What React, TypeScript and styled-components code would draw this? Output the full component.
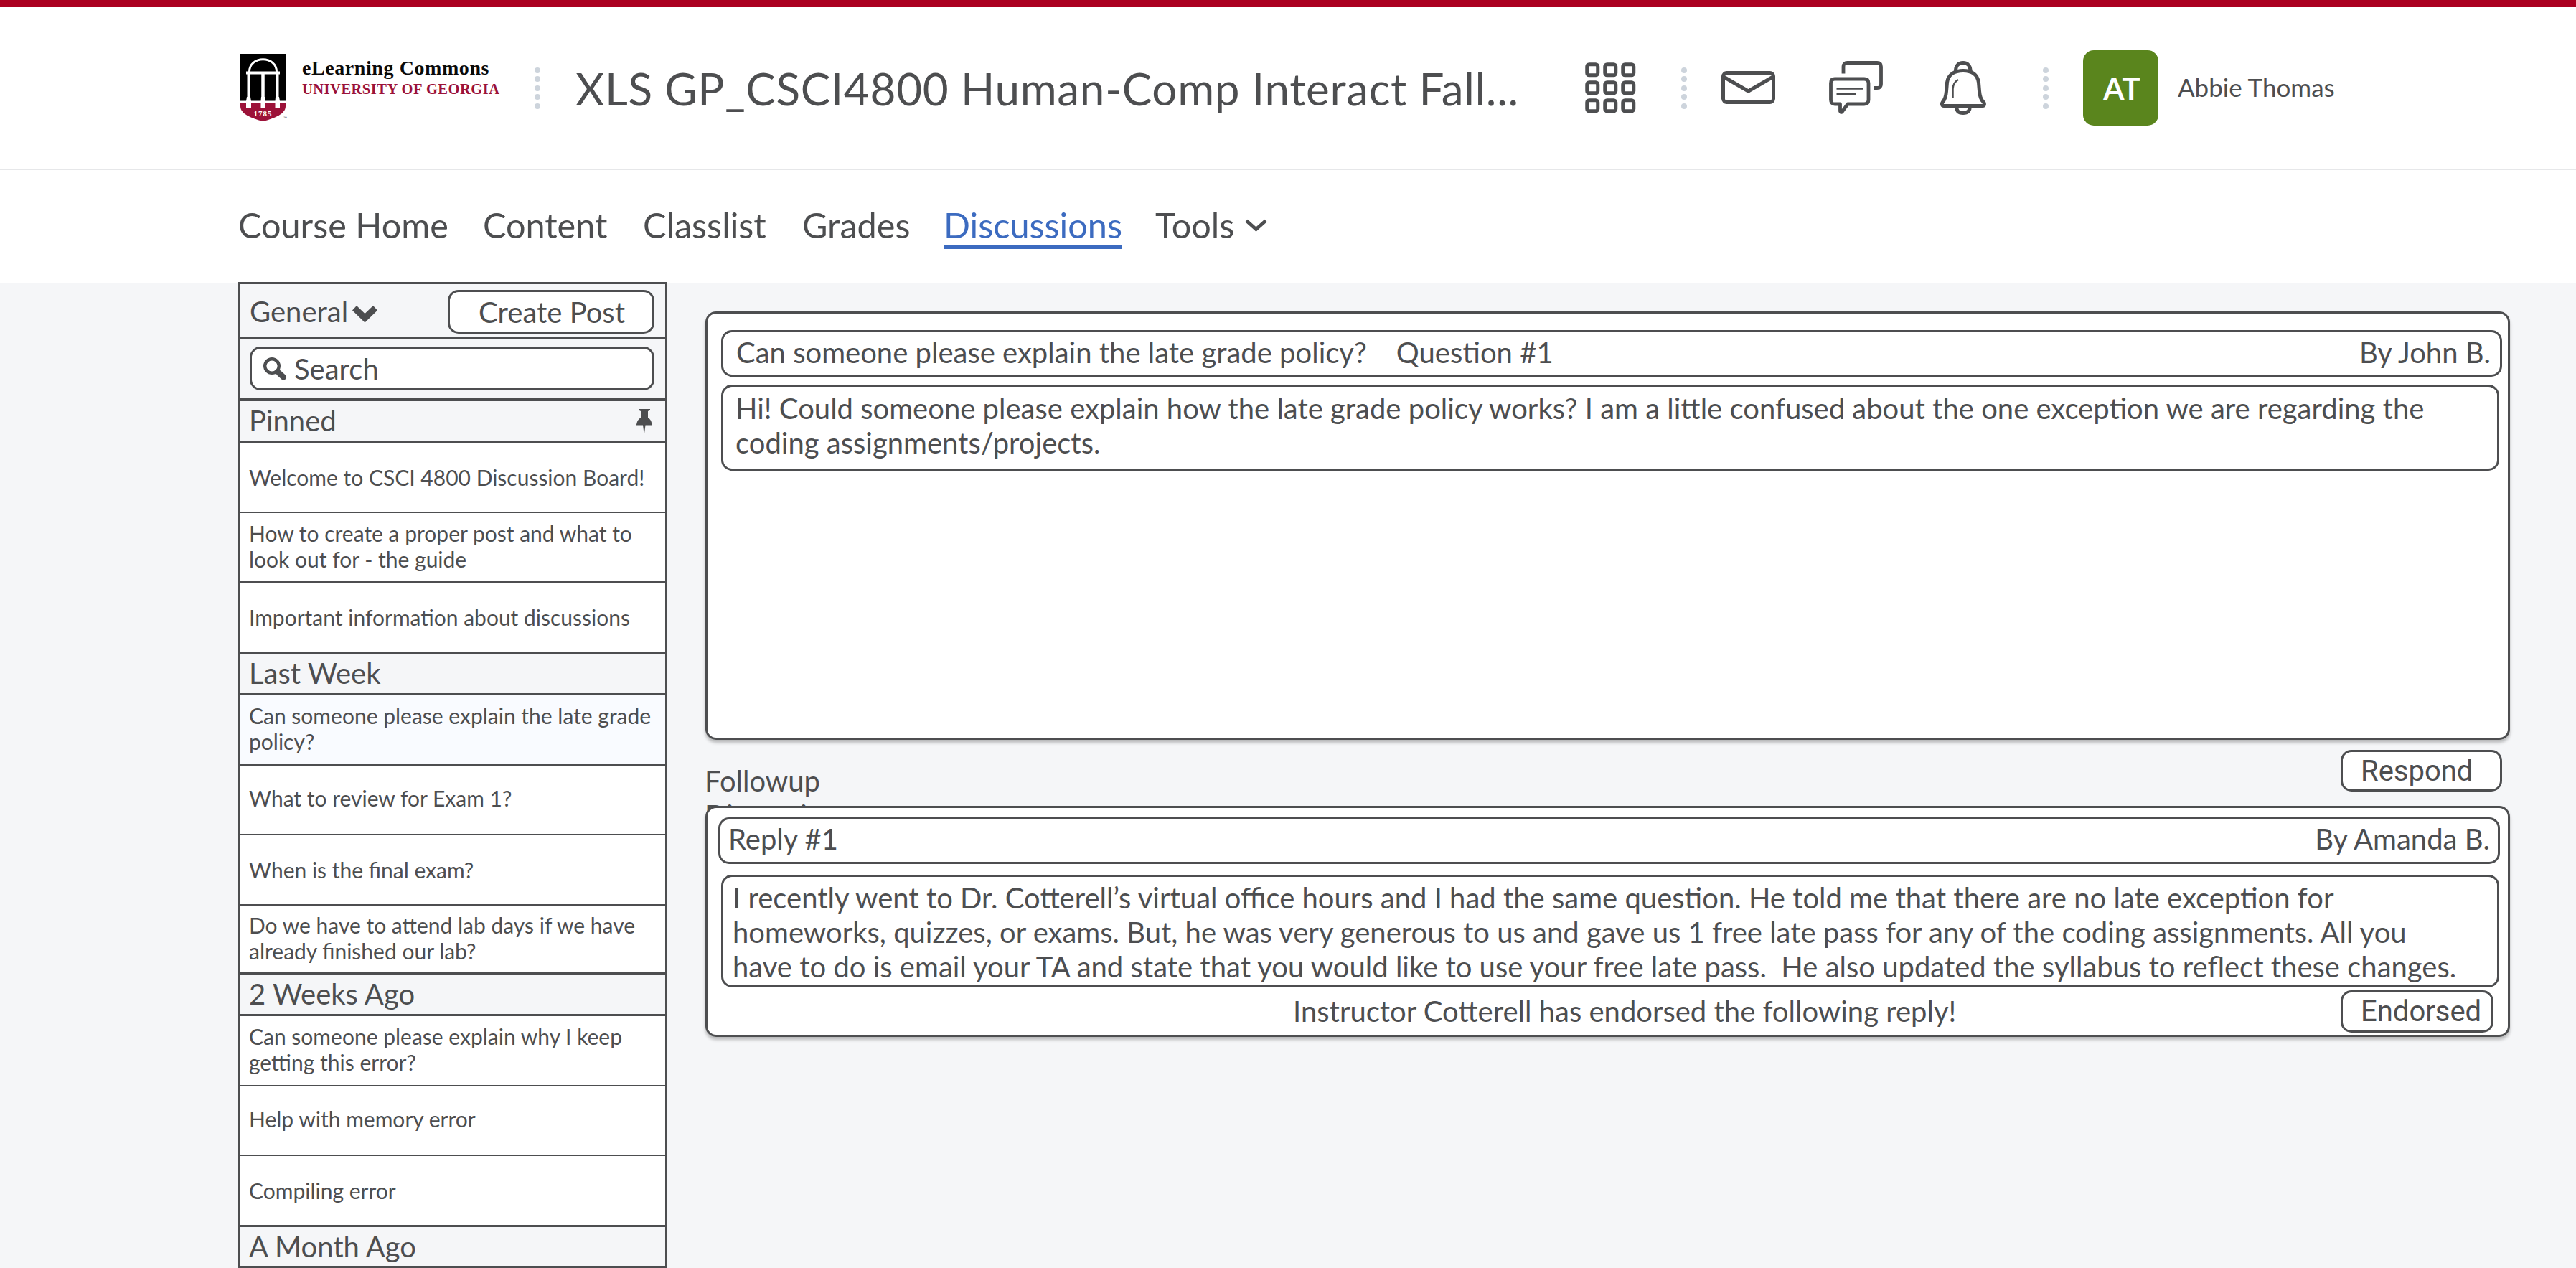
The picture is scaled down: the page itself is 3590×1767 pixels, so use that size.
import React from "react";
import styled, { createGlobalStyle } from "styled-components";

const INK = "#4d4e50";
const PAPER = "#f5f6f8";

const GlobalStyle = createGlobalStyle`
  html, body { margin: 0; padding: 0; background: ${PAPER}; }
  body { font-family: Lato, "Open Sans", sans-serif; color: ${INK}; overflow: hidden; }
  *, *::before, *::after { box-sizing: border-box; }
`;

const Page = styled.div`
  display: flex;
  flex-direction: column;
  width: 3590px;
  height: 1767px;
  overflow: hidden;
`;

const Masthead = styled.header`
  display: flex;
  align-items: flex-start;
  height: 237px;
  padding-left: 335px;
  background: #fff;
  border-top: 10px solid #ab0020;
  border-bottom: 2px solid #e6e7e9;
`;

const Logo = styled.div`
  display: flex;
  width: 410px;
  padding-top: 65px;
`;

const LogoWords = styled.div`
  display: flex;
  flex-direction: column;
  padding: 4px 0 0 19px;
  white-space: nowrap;
`;

const LogoTitle = styled.span`
  font: 700 28px/32px "Liberation Serif", serif;
  letter-spacing: 0.58px;
  color: #0a0a0a;
`;

const LogoSub = styled.span`
  margin-top: 1px;
  font: 700 20.5px/24px "Liberation Serif", serif;
  letter-spacing: 0.5px;
  color: #9c1239;
`;

const Dots = styled.div`
  display: flex;
  flex-direction: column;
  gap: 4.5px;
  width: 8px;
  margin-top: 83.5px;
`;

const Dot = styled.i`
  width: 8px;
  height: 8px;
  border-radius: 50%;
  background: #cdd4dc;
`;

const CourseTitle = styled.h1`
  width: 1405px;
  margin: 76px 0 0 49px;
  font-weight: 400;
  font-size: 62px;
  line-height: 74px;
  letter-spacing: 0.68px;
  white-space: nowrap;
`;

const IconSlot = styled.div<{ $left: number; $top: number }>`
  display: flex;
  margin: ${(p) => p.$top}px 0 0 ${(p) => p.$left}px;
`;

const Spacer = styled.div<{ $w: number }>`
  width: ${(p) => p.$w}px;
  flex: none;
`;

const Avatar = styled.div`
  display: flex;
  align-items: center;
  justify-content: center;
  width: 105px;
  height: 105px;
  margin-top: 60px;
  padding-left: 3px;
  border-radius: 15px;
  background: #5a851d;
  color: #fff;
  font-weight: 700;
  font-size: 42px;
`;

const UserName = styled.span`
  margin: 90px 0 0 27px;
  font-size: 35px;
  line-height: 42px;
  white-space: nowrap;
`;

const Nav = styled.nav`
  display: flex;
  height: 157px;
  padding: 47px 0 0 332px;
  background: #fff;
`;

const NavItem = styled.a<{ $w: number; $active?: boolean }>`
  width: ${(p) => p.$w}px;
  font-size: 48.6px;
  line-height: 59px;
  white-space: nowrap;
  color: ${(p) => (p.$active ? "#3c6bc0" : "inherit")};
  span {
    display: inline-block;
    height: 63px;
    border-bottom: ${(p) => (p.$active ? "5px solid #3c6bc0" : "0")};
  }
  svg { margin-left: 15px; vertical-align: 8px; }
`;

const Body = styled.main`
  display: flex;
  flex: 1;
  align-items: flex-start;
  padding-left: 332px;
`;

const Sidebar = styled.aside`
  width: 598px;
  margin-top: -1px;
  border: 3px solid ${INK};
  background: ${PAPER};
`;

const Toolbar = styled.div`
  display: flex;
  height: 77px;
  padding: 8px 15px 0 13px;
  justify-content: space-between;
  border-bottom: 3px solid ${INK};
`;

const Picker = styled.div`
  display: flex;
  padding-top: 6px;
  font-size: 40px;
  line-height: 48px;
  svg { margin: 16px 0 0 6px; }
`;

const SearchRow = styled.div`
  height: 86px;
  padding: 10px 15px 0 13px;
  border-bottom: 4px solid ${INK};
`;

const Pill = styled.div<{ $w: number; $h: number; $pad: number; $drop?: number; $roboto?: boolean }>`
  display: flex;
  align-items: center;
  flex: none;
  width: ${(p) => p.$w}px;
  height: ${(p) => p.$h}px;
  padding: ${(p) => p.$drop ?? 0}px 0 0 ${(p) => p.$pad}px;
  border: 3px solid ${INK};
  border-radius: 15px;
  background: #fff;
  font-family: ${(p) => (p.$roboto ? "Roboto, sans-serif" : "inherit")};
  font-size: 40px;
  line-height: 48px;
  white-space: nowrap;
`;

const SearchIcon = styled.svg`
  margin-right: 10px;
`;

const SectionHead = styled.div<{ $h: number; $end?: boolean }>`
  display: flex;
  justify-content: space-between;
  height: ${(p) => p.$h}px;
  padding: 3px 18px 0 12px;
  border-bottom: ${(p) => (p.$end ? 0 : 3)}px solid ${INK};
  font-size: 40px;
  line-height: 48px;
  svg { margin-top: 8px; }
`;

const Thread = styled.div<{ $h: number; $lift: number; $on?: boolean; $last?: boolean }>`
  display: flex;
  align-items: center;
  height: ${(p) => p.$h}px;
  padding: 0 10px ${(p) => p.$lift}px 12px;
  border-bottom: ${(p) => (p.$last ? 3 : 2)}px solid ${INK};
  background: ${(p) => (p.$on ? "#f9fbff" : "#fff")};
  font-size: 30px;
  line-height: 36px;
  white-space: pre;
`;

const Content = styled.section`
  display: flex;
  flex-direction: column;
  width: 2515px;
  margin: 40px 0 0 53px;
`;

const Card = styled.article<{ $h: number; $pt: number }>`
  display: flex;
  flex-direction: column;
  position: relative;
  height: ${(p) => p.$h}px;
  padding-top: ${(p) => p.$pt}px;
  border: 3px solid ${INK};
  border-radius: 15px;
  background: #fff;
  box-shadow: 0 4px 4px rgba(0, 0, 0, 0.25);
`;

const Box = styled.div<{ $w: number; $h: number; $ml: number; $mt?: number; $pad: string }>`
  display: flex;
  justify-content: space-between;
  flex: none;
  width: ${(p) => p.$w}px;
  height: ${(p) => p.$h}px;
  margin: ${(p) => p.$mt ?? 0}px 0 0 ${(p) => p.$ml}px;
  padding: ${(p) => p.$pad};
  border: 3px solid ${INK};
  border-radius: 15px;
  background: #fff;
  font-size: 40px;
  line-height: 48px;
  white-space: pre;
`;

const Between = styled.div`
  display: flex;
  height: 92px;
  padding: 14px 11px 0 0;
  justify-content: space-between;
  align-items: flex-start;
`;

const Followup = styled.div`
  width: 190px;
  margin: 19px 0 0 -1px;
  font-size: 40px;
  line-height: 48px;
`;

const EndorseRow = styled.div`
  display: flex;
  justify-content: space-between;
  padding: 4px 20px 0 816px;
  font-size: 40px;
  line-height: 48px;
`;

const EndorseText = styled.span`
  padding-top: 5px;
`;

const Separator = () => (
  <Dots>
    {[0, 1, 2, 3, 4].map((n) => (
      <Dot key={n} />
    ))}
  </Dots>
);

const Shield = () => (
  <svg width="67" height="96" viewBox="0 0 67 96">
    <path d="M0 0H63V66H0Z" fill="#000" />
    <path d="M0 69H63V73C63 84 47 90 31.500 94C16 90 0 84 0 73Z" fill="#9c1239" />
    <g fill="none" stroke="#fff">
      <path d="M12.500 25C12.500 2 50.500 2 50.500 25" strokeWidth="3" />
      <path d="M8 26.500H55" strokeWidth="4" />
      <path d="M11.500 28V62M51.500 28V62" strokeWidth="4" />
      <path d="M31.500 28V62" strokeWidth="4.500" />
    </g>
    <path d="M9 60H14L15 66V75H8V66ZM29 60H34L35 66V75H28.500V66ZM49 60H54L55 66V75H48.500V66Z" fill="#fff" />
    <path d="M0 65.500H63V69H0Z" fill="#fff" />
    <text x="31.500" y="87" textAnchor="middle" fontFamily="Liberation Serif" fontWeight="700" fontSize="11" letterSpacing="1" fill="#fff">1785</text>
    <text x="60" y="91" fontFamily="Liberation Sans" fontSize="5" fill="#333">™</text>
  </svg>
);

const GridIcon = () => (
  <svg width="71" height="71" fill="none" stroke={INK} strokeWidth="5">
    {[0, 25, 50].map((y) =>
      [0, 25, 50].map((x) => <rect key={`${x}-${y}`} x={x + 2.75} y={y + 2.75} width="15" height="15" rx="3" />)
    )}
  </svg>
);

const MailIcon = () => (
  <svg width="75" height="46" fill="none" stroke={INK} strokeWidth="5">
    <rect x="2.500" y="2.500" width="70" height="41" rx="5" />
    <path d="M3 8L37.500 28L72 8" />
  </svg>
);

const ChatIcon = () => (
  <svg width="75" height="75" fill="none" stroke={INK} strokeWidth="4.800">
    <path d="M20 17.500V8Q20 2.500 25.500 2.500H67Q72.500 2.500 72.500 8V32Q72.500 37.500 67 37.500H63" />
    <path d="M8 25H49Q55 25 55 31V54Q55 60 49 60H26L18 71Q16 72 15.500 70V60H8Q2.500 60 2.500 54V31Q2.500 25 8 25Z" strokeLinejoin="round" />
    <path d="M10.500 38.500H48M10.500 46H37.500" strokeWidth="2.600" />
  </svg>
);

const BellIcon = () => (
  <svg width="64" height="75" fill="none" stroke={INK} strokeWidth="5">
    <path d="M5 62.500C2 62.500 2 59 3.500 57C7 53 8 49 8.500 42L9.500 30C11 19 20 13.500 32 13.500C44 13.500 52 19 53.500 30L54.500 42C55 49 56 53 60 57C62 59 62 62.500 59 62.500Z" />
    <path d="M21.500 15C21 7 25 2.500 32 2.500C38 2.500 42.500 7 42 15" />
    <path d="M23 63C22 69 25 72.500 32 72.500C38 72.500 42 69 41 63" />
    <path d="M17.500 51V39Q18 30 25 26" strokeWidth="2.500" />
  </svg>
);

const Thin = () => (
  <svg width="32" height="19" fill="none" stroke={INK} strokeWidth="5">
    <path d="M2 2.500L15.500 14.500L29 2.500" />
  </svg>
);

const Bold = () => (
  <svg width="36" height="24">
    <path d="M0 6.500L6 0L17.500 11L29 0L35 6.500L17.500 23.500Z" fill={INK} />
  </svg>
);

const Pin = () => (
  <svg width="22" height="34">
    <path d="M3 0H19V1.500L16 3V12Q21 15 21.500 21.500V22.500H12.500L11 34H10.500L9 22.500H0V21.500Q1 15 6 12V3L3 1.500Z" fill={INK} />
  </svg>
);

type Row = { text: string; h: number; lift?: number; on?: boolean };
type Group = { name: string; h: number; pinned?: boolean; rows: Row[] };

const groups: Group[] = [
  {
    name: "Pinned",
    h: 58,
    pinned: true,
    rows: [
      { text: "Welcome to CSCI 4800 Discussion Board!", h: 98 },
      { text: "How to create a proper post and what to\nlook out for - the guide", h: 97, lift: 3 },
      { text: "Important information about discussions", h: 99 },
    ],
  },
  {
    name: "Last Week",
    h: 58,
    rows: [
      { text: "Can someone please explain the late grade\npolicy?", h: 98, lift: 4, on: true },
      { text: "What to review for Exam 1?", h: 97, lift: 5 },
      { text: "When is the final exam?", h: 98 },
      { text: "Do we have to attend lab days if we have\nalready finished our lab?", h: 96, lift: 3 },
    ],
  },
  {
    name: "2 Weeks Ago",
    h: 58,
    rows: [
      { text: "Can someone please explain why I keep\ngetting this error?", h: 98, lift: 4 },
      { text: "Help with memory error", h: 97, lift: 5 },
      { text: "Compiling error", h: 99 },
    ],
  },
  { name: "A Month Ago", h: 54, rows: [] },
];

export default function App() {
  return (
    <Page>
      <GlobalStyle />
      <Masthead>
        <Logo>
          <Shield />
          <LogoWords>
            <LogoTitle>eLearning Commons</LogoTitle>
            <LogoSub>UNIVERSITY OF GEORGIA</LogoSub>
          </LogoWords>
        </Logo>
        <Separator />
        <CourseTitle>XLS GP_CSCI4800 Human-Comp Interact Fall...</CourseTitle>
        <IconSlot $left={2} $top={77}><GridIcon /></IconSlot>
        <Spacer $w={63} />
        <Separator />
        <IconSlot $left={48} $top={89}><MailIcon /></IconSlot>
        <IconSlot $left={75} $top={75}><ChatIcon /></IconSlot>
        <IconSlot $left={80} $top={75}><BellIcon /></IconSlot>
        <Spacer $w={79} />
        <Separator />
        <Spacer $w={48} />
        <Avatar>AT</Avatar>
        <UserName>Abbie Thomas</UserName>
      </Masthead>
      <Nav>
        <NavItem $w={341}><span>Course Home</span></NavItem>
        <NavItem $w={223}><span>Content</span></NavItem>
        <NavItem $w={222}><span>Classlist</span></NavItem>
        <NavItem $w={197}><span>Grades</span></NavItem>
        <NavItem $w={295} $active><span>Discussions</span></NavItem>
        <NavItem $w={200}><span>Tools</span><Thin /></NavItem>
      </Nav>
      <Body>
        <Sidebar>
          <Toolbar>
            <Picker>General<Bold /></Picker>
            <Pill $w={288} $h={61} $pad={40} $drop={1}>Create Post</Pill>
          </Toolbar>
          <SearchRow>
            <Pill $w={564} $h={61} $pad={16}>
              <SearchIcon width="33" height="32" fill="none" stroke={INK}>
                <circle cx="12" cy="12" r="9.800" strokeWidth="4.400" />
                <path d="M19 19L22 22" strokeWidth="5" />
                <path d="M22 22L28 27.500" strokeWidth="8" strokeLinecap="round" />
              </SearchIcon>
              Search
            </Pill>
          </SearchRow>
          {groups.map((g, i) => (
            <React.Fragment key={g.name}>
              <SectionHead $h={g.h} $end={i === groups.length - 1}>
                {g.name}
                {g.pinned && <Pin />}
              </SectionHead>
              {g.rows.map((r, n) => (
                <Thread key={r.text} $h={r.h} $lift={r.lift ?? 0} $on={r.on} $last={n === g.rows.length - 1}>
                  {r.text}
                </Thread>
              ))}
            </React.Fragment>
          ))}
        </Sidebar>
        <Content>
          <Card $h={597} $pt={23}>
            <Box $w={2482} $h={65} $ml={19} $pad="4px 13px 0 18px">
              <span>Can someone please explain the late grade policy?    Question #1</span>
              <span>By John B.</span>
            </Box>
            <Box $w={2478} $h={120} $ml={19} $mt={11} $pad="6px 14px 0 17px">
              {"Hi! Could someone please explain how the late grade policy works? I am a little confused about the one exception we are regarding the\ncoding assignments/projects."}
            </Box>
          </Card>
          <Between>
            <Followup>Followup Discussions</Followup>
            <Pill $w={225} $h={58} $pad={25} $drop={1} $roboto>Respond</Pill>
          </Between>
          <Card $h={322} $pt={13}>
            <Box $w={2483} $h={65} $ml={15} $pad="3px 11px 0 11px">
              <span>Reply #1</span>
              <span>By Amanda B.</span>
            </Box>
            <Box $w={2478} $h={157} $ml={19} $mt={15} $pad="5px 14px 0 13px">
              {"I recently went to Dr. Cotterell’s virtual office hours and I had the same question. He told me that there are no late exception for\nhomeworks, quizzes, or exams. But, he was very generous to us and gave us 1 free late pass for any of the coding assignments. All you\nhave to do is email your TA and state that you would like to use your free late pass.  He also updated the syllabus to reflect these changes."}
            </Box>
            <EndorseRow>
              <EndorseText>Instructor Cotterell has endorsed the following reply!</EndorseText>
              <Pill $w={213} $h={59} $pad={25} $roboto>Endorsed</Pill>
            </EndorseRow>
          </Card>
        </Content>
      </Body>
    </Page>
  );
}
